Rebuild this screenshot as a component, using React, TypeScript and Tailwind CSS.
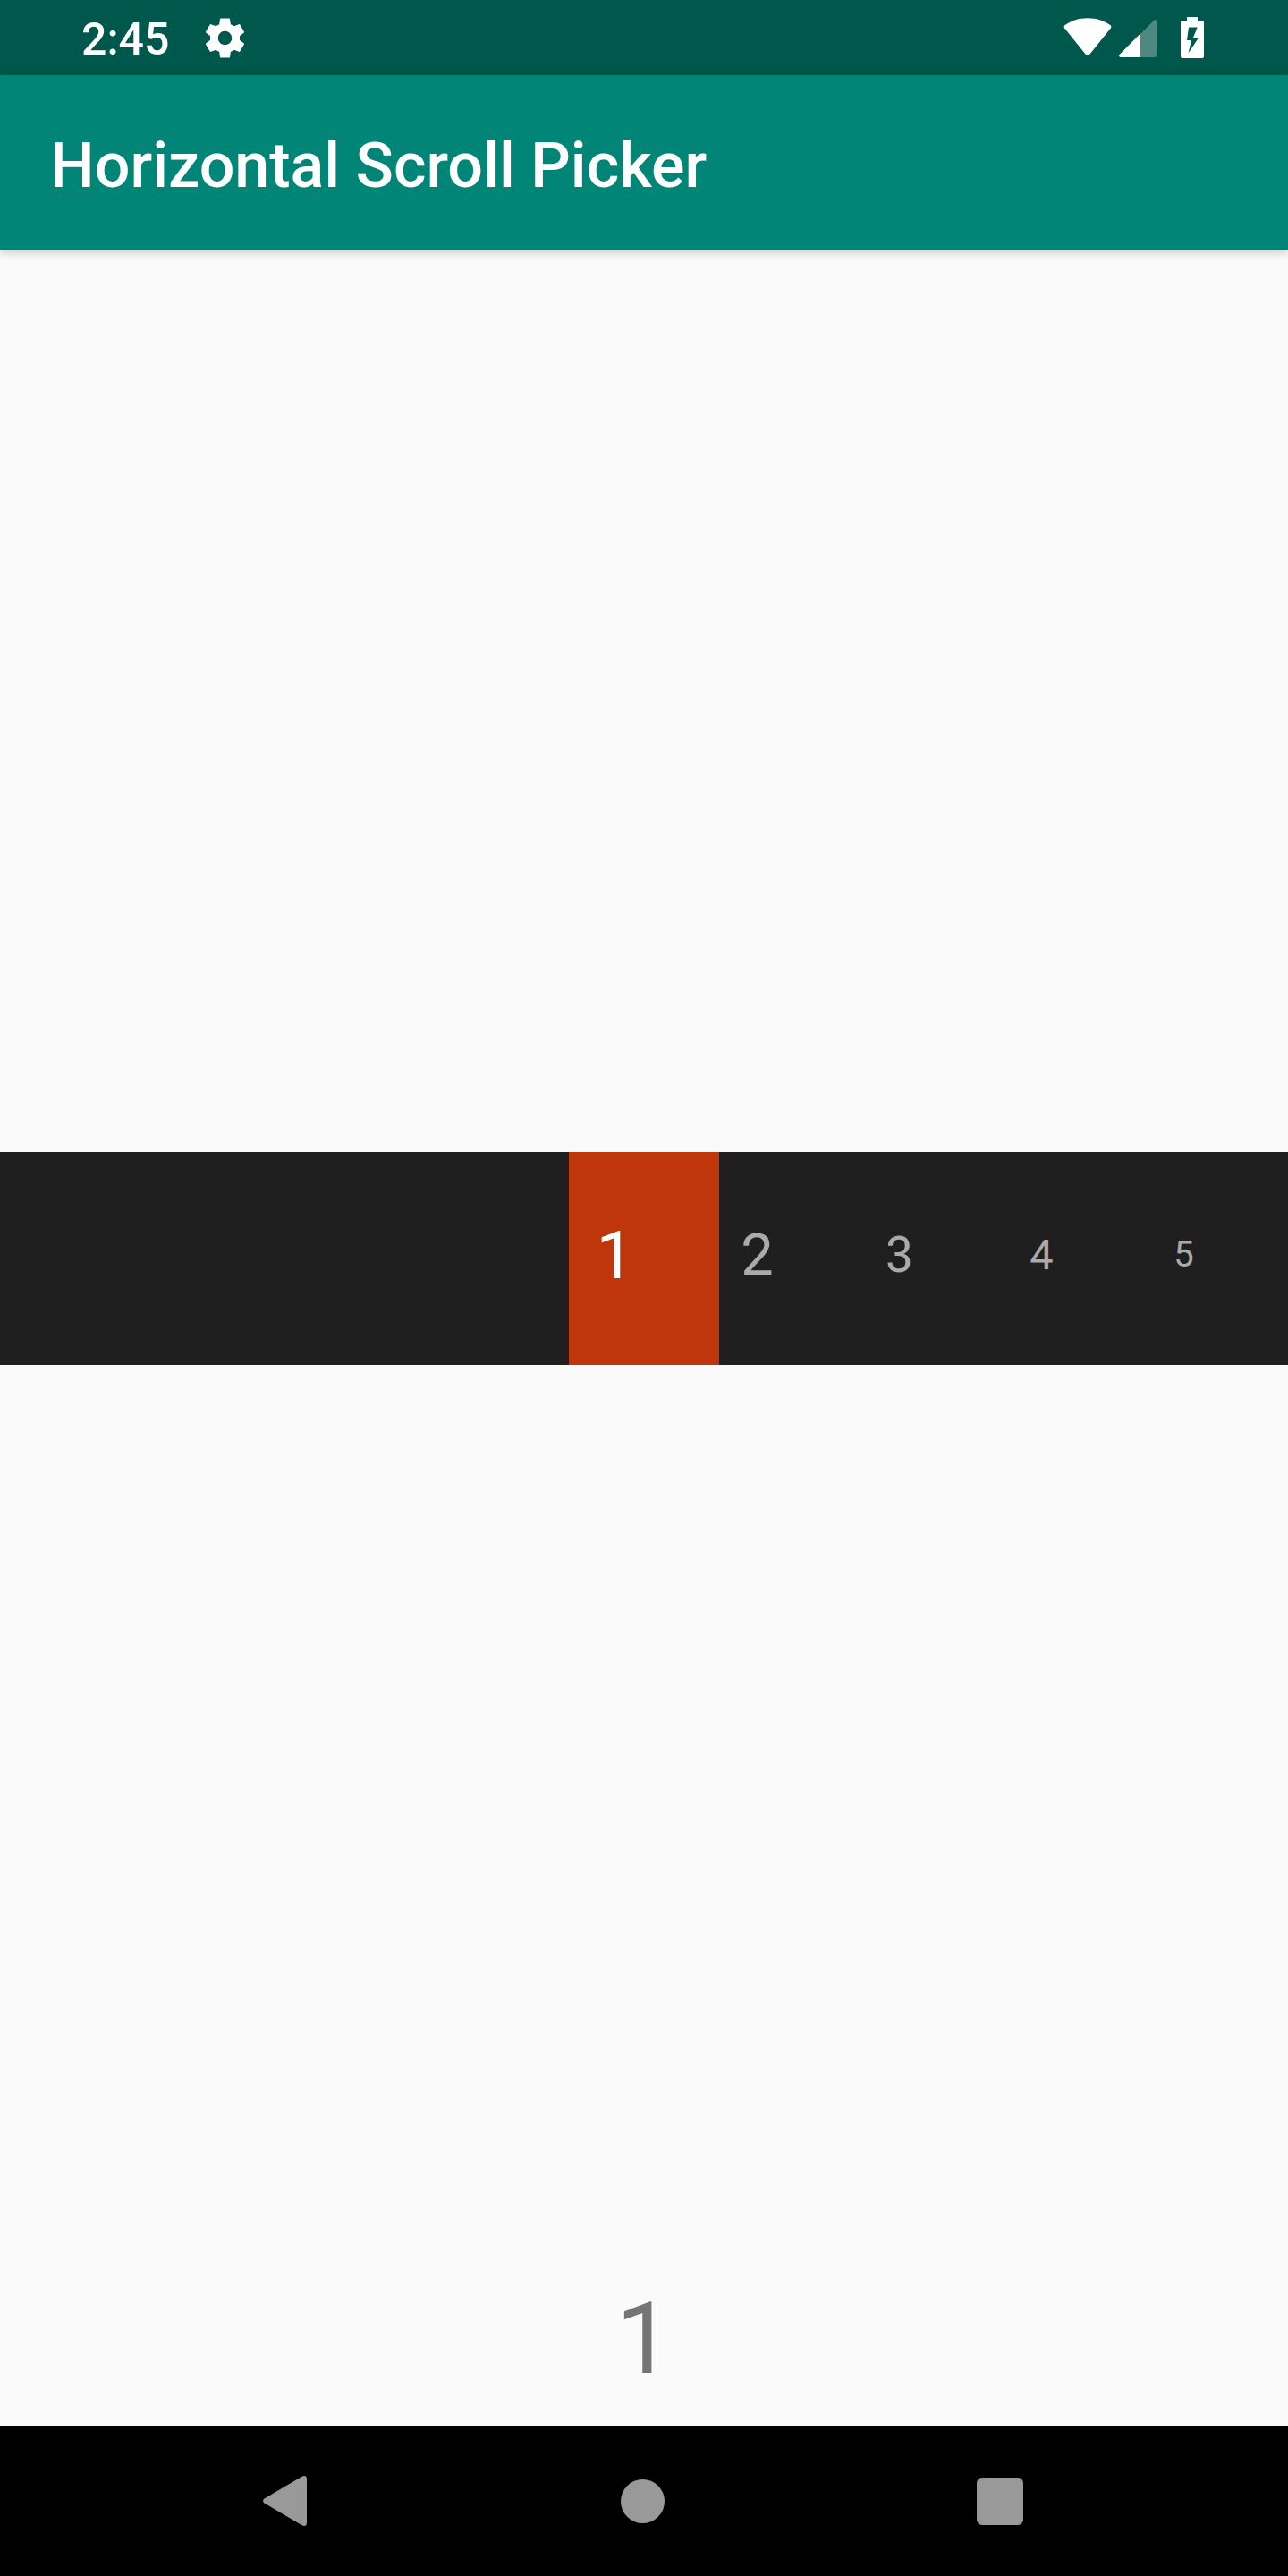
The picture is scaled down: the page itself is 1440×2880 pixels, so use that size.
import { useState } from "react";

const items = [
  { value: 1, size: "text-[75px]" },
  { value: 2, size: "text-[65px]" },
  { value: 3, size: "text-[55px]" },
  { value: 4, size: "text-[47px]" },
  { value: 5, size: "text-[40px]" },
];

function StatusBar() {
  return (
    <div className="flex h-[84px] items-center bg-[#00574b] pr-[94px] pl-[91px] text-white">
      <span className="pt-1 text-[50px] leading-[60px] font-medium">2:45</span>
      <svg className="ml-9 h-[53px] w-[53px]" viewBox="0 0 24 24" fill="currentColor" aria-label="Settings">
        <path d="M19.43 12.98c.04-.32.07-.64.07-.98s-.03-.66-.07-.98l2.11-1.65c.19-.15.24-.42.12-.64l-2-3.46c-.12-.22-.39-.3-.61-.22l-2.49 1c-.52-.4-1.08-.73-1.69-.98l-.38-2.65C14.46 2.18 14.25 2 14 2h-4c-.25 0-.46.18-.49.42l-.38 2.65c-.61.25-1.17.59-1.69.98l-2.49-1c-.23-.09-.49 0-.61.22l-2 3.46c-.13.22-.07.49.12.64l2.11 1.65c-.04.32-.07.65-.07.98s.03.66.07.98l-2.11 1.65c-.19.15-.24.42-.12.64l2 3.46c.12.22.39.3.61.22l2.49-1c.52.4 1.08.73 1.69.98l.38 2.65c.03.24.24.42.49.42h4c.25 0 .46-.18.49-.42l.38-2.65c.61-.25 1.17-.59 1.69-.98l2.49 1c.23.09.49 0 .61-.22l2-3.46c.12-.22.07-.49-.12-.64l-2.11-1.65zM12 15.5c-1.93 0-3.5-1.57-3.5-3.5s1.57-3.5 3.5-3.5 3.5 1.57 3.5 3.5-1.57 3.5-3.5 3.5z" />
      </svg>
      <div className="ml-auto flex items-center">
        <svg className="h-[46px] w-[54px]" viewBox="0 0 54 46" fill="currentColor" aria-label="Wi-Fi">
          <path d="M1.2 12.5Q-.3 10.3 1.8 9C9 4 17 1.3 27 1.3S45 4 52.2 9Q54.3 10.3 52.8 12.5L29.5 41.5Q27 44.5 24.5 41.5Z" />
        </svg>
        <svg className="ml-2 h-[46px] w-[42px]" viewBox="0 0 42 46" fill="currentColor" aria-label="Mobile signal">
          <path opacity=".3" d="M24 19 39.5 3.6Q42 1.7 42 4.500V43Q42 45 40 45H24Z" />
          <path d="M24 18.5V45H2Q-1 44.5 .8 41.7Z" />
        </svg>
        <svg className="ml-[27px] h-[46px] w-[26px]" viewBox="0 0 26 46" fill="currentColor" aria-label="Battery charging">
          <path fillRule="evenodd" d="M7 0H19V4H24Q26 4 26 6V44Q26 46 24 46H2Q0 46 0 44V6Q0 4 2 4H7ZM9 11.5 7 26H12L8.5 40.5 20.2 23H14L18.7 11.5Z" />
        </svg>
      </div>
    </div>
  );
}

export default function App() {
  const [selected, setSelected] = useState(1);

  return (
    <div className="flex min-h-screen flex-col bg-[#fafafb] font-['Roboto',sans-serif]">
      <StatusBar />
      <header className="flex h-[196px] items-center bg-[#008577] px-14 pt-1.5 text-white shadow-[0_2px_10px_rgba(0,0,0,0.2)]">
        <h1 className="text-[70px] leading-[84px] font-medium">Horizontal Scroll Picker</h1>
      </header>

      <main className="flex flex-1 flex-col">
        <div className="flex-1" />
        <div className="relative h-[238px] overflow-hidden bg-[#1f1f1f]">
          <div className="absolute inset-y-0 left-1/2 w-[168px] -translate-x-1/2 bg-[#bf360c]" />
          <div className="relative ml-[calc(50%-112px)] flex h-full" aria-label="Number picker" role="group">
            {items.map(({ value, size }) => (
              <button
                key={value}
                type="button"
                aria-pressed={selected === value}
                onClick={() => setSelected(value)}
                className={`flex h-full w-[159px] shrink-0 items-center justify-center pb-2 leading-[90px] ${size} ${
                  selected === value ? "text-white" : "text-[#aaaaaa]"
                }`}
              >
                {value}
              </button>
            ))}
          </div>
        </div>
        <div className="flex-1" />
        <output className="block pt-4 pb-8 text-center text-[112px] leading-[130px] text-[#757575]">{selected}</output>
      </main>

      <nav className="grid h-[168px] grid-cols-3 bg-black pr-[122px] pl-[118px] text-[#999999]" aria-label="System">
        <button type="button" aria-label="Back" className="flex items-center justify-center">
          <svg className="h-14 w-[49px]" viewBox="0 0 49 56" fill="currentColor">
            <path d="M1.5 25.5 43.500 .7Q49 -1.5 49 4V52Q49 57.5 43.5 55.3L1.5 30.5Q-1.5 28 1.5 25.5Z" />
          </svg>
        </button>
        <button type="button" aria-label="Home" className="flex items-center justify-center">
          <span className="h-[49px] w-[49px] rounded-full bg-current" />
        </button>
        <button type="button" aria-label="Recent apps" className="flex items-center justify-center">
          <span className="h-[53px] w-[52px] rounded-[6px] bg-current" />
        </button>
      </nav>
    </div>
  );
}
